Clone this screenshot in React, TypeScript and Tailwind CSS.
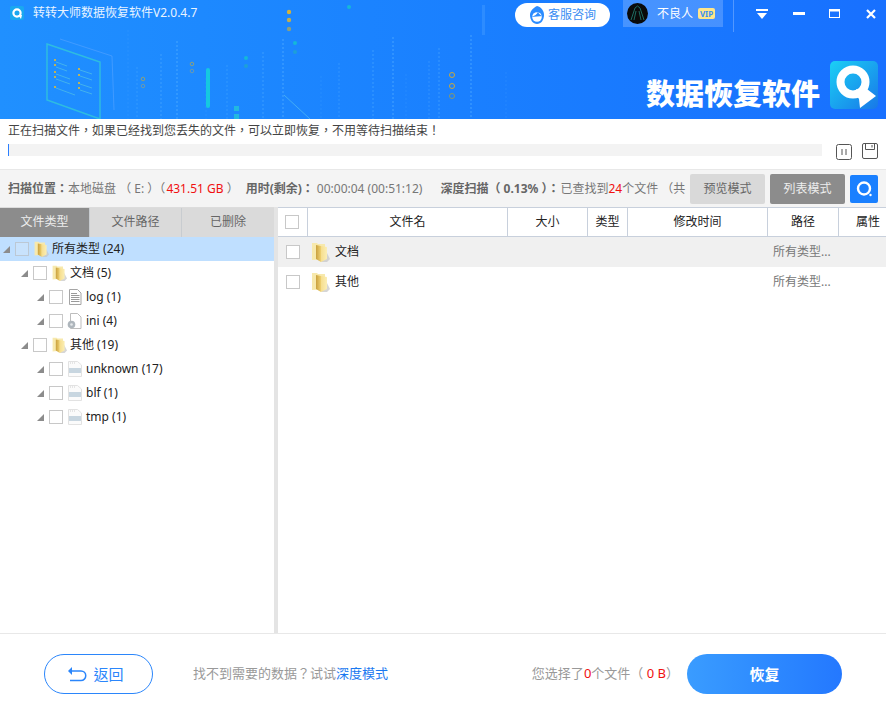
const font = { fontFamily: '"Noto Sans", "Noto Sans CJK TC", sans-serif' }

function Folder({ size = 20 }: { size?: number }) {
  return (
    <svg width={size} height={size} viewBox="0 0 20 20" className="shrink-0">
      <defs>
        <linearGradient id="foldMid" x1="0" y1="0" x2="1" y2="0">
          <stop offset="0" stopColor="#c9a03e" />
          <stop offset="1" stopColor="#f0d272" />
        </linearGradient>
        <linearGradient id="foldRight" x1="0" y1="0" x2="1" y2="0">
          <stop offset="0" stopColor="#f6de8e" />
          <stop offset="1" stopColor="#fbeeb5" />
        </linearGradient>
      </defs>
      <path d="M16 9 L20 17 L17 20 L11 20 Z" fill="#c4c4c4" opacity="0.7" />
      <path d="M2 1 H7 L8 2 H15 V17 L2 18 Z" fill="#f7e9ad" />
      <path d="M6 3 L11 4 V20 L6 17 Z" fill="url(#foldMid)" />
      <path d="M11 4 L17 5 V17 L11 20 Z" fill="url(#foldRight)" />
    </svg>
  )
}

function TextFile() {
  return (
    <svg width="14" height="16" viewBox="0 0 14 16" className="shrink-0">
      <path d="M1.5 .5 H9.5 L13 4 V15.5 H1.5 Z" fill="#fff" stroke="#a5a5a5" />
      <path d="M3 4.5 H9 M3 6.5 H11.5 M3 8.5 H11.5 M3 10.5 H11.5 M3 12.5 H11.5" stroke="#9a9a9a" />
    </svg>
  )
}

function IniFile() {
  return (
    <svg width="15" height="16" viewBox="0 0 15 16" className="shrink-0">
      <path d="M3.5 .5 H10.5 L14 4 V15.5 H3.5 Z" fill="#fff" stroke="#bdbdbd" />
      <circle cx="4.5" cy="11.5" r="3.8" fill="#aeb6bc" />
      <circle cx="4.5" cy="11.5" r="1.3" fill="#e4e8ea" />
    </svg>
  )
}

function BlankFile() {
  return (
    <svg width="14" height="16" viewBox="0 0 14 16" className="shrink-0">
      <path d="M.5 .5 H9.5 L13.5 4 V15.5 H.5 Z" fill="#fbfbfb" stroke="#e2e2e2" />
      <path d="M2 2 H8" stroke="#cfcfcf" strokeDasharray="1 1" />
      <rect x="1" y="7" width="12" height="5" fill="#c8d6e0" />
    </svg>
  )
}

function Check({ color = "border-[#c8c8c8] bg-white" }: { color?: string }) {
  return <span className={`block size-[14px] shrink-0 border ${color}`} />
}

function Arrow() {
  return (
    <svg width="7" height="7" viewBox="0 0 7 7" className="shrink-0">
      <path d="M7 0 V7 H0 Z" fill="#8c8c8c" />
    </svg>
  )
}

const tree = [
  { label: "所有类型 (24)", pad: "pl-[3px]", icon: <Folder size={16} />, iconBox: "ml-[3px] w-[17px]", text: "ml-[3px]", selected: true },
  { label: "文档 (5)", pad: "pl-[21px]", icon: <Folder size={16} />, iconBox: "ml-[3px] w-[17px]", text: "ml-[3px]" },
  { label: "log (1)", pad: "pl-[37px]", icon: <TextFile />, iconBox: "ml-[5px] w-[14px]", text: "ml-[4px]" },
  { label: "ini (4)", pad: "pl-[37px]", icon: <IniFile />, iconBox: "ml-[3px] w-[16px]", text: "ml-[4px]" },
  { label: "其他 (19)", pad: "pl-[21px]", icon: <Folder size={16} />, iconBox: "ml-[3px] w-[17px]", text: "ml-[3px]" },
  { label: "unknown (17)", pad: "pl-[37px]", icon: <BlankFile />, iconBox: "ml-[5px] w-[14px]", text: "ml-[4px]" },
  { label: "blf (1)", pad: "pl-[37px]", icon: <BlankFile />, iconBox: "ml-[5px] w-[14px]", text: "ml-[4px]" },
  { label: "tmp (1)", pad: "pl-[37px]", icon: <BlankFile />, iconBox: "ml-[5px] w-[14px]", text: "ml-[4px]" },
]

const columns = [
  { label: "文件名", w: "w-[200px] justify-center" },
  { label: "大小", w: "w-[80px] justify-center" },
  { label: "类型", w: "w-[40px] justify-center" },
  { label: "修改时间", w: "w-[140px] justify-center" },
  { label: "路径", w: "w-[71px] justify-center" },
  { label: "属性", w: "flex-1 pl-[17px]" },
]

function BannerArt() {
  const dots: { x: number; y: number; o: number }[] = []
  const cols = [127, 136, 160, 176, 205, 226, 262, 282, 320, 338, 372, 392, 405, 428, 438, 470, 505]
  cols.forEach((x, i) => {
    const top = 30 + ((i * 37) % 50)
    for (let y = top; y < 119; y += 4) dots.push({ x, y, o: 0.06 + (i % 4) * 0.05 })
  })
  return (
    <svg className="absolute inset-0" width="886" height="119" viewBox="0 0 886 119">
      {dots.map((d, i) => (
        <rect key={i} x={d.x} y={d.y} width="2" height="2" fill="#7fd0ff" opacity={d.o} />
      ))}
      <path d="M47 44 L100 62 L100 119 L47 100 Z" fill="none" stroke="#38d6d0" strokeWidth="1.5" opacity="0.65" />
      <path d="M60 39 L112 56 L114 110" fill="none" stroke="#7fb4ff" strokeWidth="1" opacity="0.35" />
      <path d="M56 62 L67 66 M56 67 L67 71 M56 74 L70 79 M56 79 L70 84 M56 88 L75 95 M80 70 L92 74 M80 76 L92 80 M80 84 L92 88 M80 90 L92 94" stroke="#5fd0e0" opacity="0.55" />
      <path d="M54 60 h2 M54 65 h2 M54 72 h2 M54 77 h2 M54 87 h2 M78 69 h2 M78 75 h2 M78 83 h2 M78 88 h2" stroke="#f4c020" strokeWidth="1.5" />
      <rect x="206" y="68" width="4" height="40" rx="2" fill="#15c8e0" />
      <rect x="234" y="106" width="5" height="5" fill="#22b8e0" />
      <rect x="234" y="114" width="5" height="5" fill="#22b8e0" />
      <path d="M284 95 L310 119" stroke="#5fc8f0" opacity="0.6" />
      <rect x="482" y="5" width="3" height="30" fill="#2d8cff" />
      <circle cx="289" cy="12" r="2.2" fill="#d3b23c" />
      <circle cx="289" cy="20" r="2.2" fill="#c0ae50" />
      <circle cx="289" cy="29" r="2.2" fill="#8aa080" />
      <circle cx="295" cy="43" r="2" fill="#15b8d8" />
      <circle cx="295" cy="52" r="2" fill="#1e9fd8" />
      <circle cx="246" cy="58" r="2" fill="#15b8d8" />
      <circle cx="246" cy="66" r="2" fill="#1e9fd8" />
      <circle cx="349" cy="7" r="2" fill="#15b8d8" />
      <circle cx="192" cy="64" r="1.8" fill="none" stroke="#8aa080" />
      <circle cx="192" cy="71" r="1.8" fill="none" stroke="#6a9ab0" />
      <circle cx="143" cy="79" r="1.8" fill="none" stroke="#8aa080" />
      <circle cx="143" cy="86" r="1.8" fill="none" stroke="#6a9ab0" />
      <circle cx="452" cy="75" r="2.5" fill="none" stroke="#c8a83c" />
      <circle cx="452" cy="86" r="2.5" fill="none" stroke="#c8a83c" />
      <circle cx="452" cy="96" r="2.5" fill="none" stroke="#88986c" />
    </svg>
  )
}

export default function App() {
  return (
    <div className="flex h-[709px] w-[886px] flex-col overflow-hidden bg-white text-xs" style={font}>
      {/* banner */}
      <div className="relative h-[119px] shrink-0 bg-gradient-to-r from-[#2090ff] to-[#1870ff]">
        <BannerArt />
        <div className="relative flex h-[32px] items-start pr-[10px]">
          <svg width="14" height="14" viewBox="0 0 14 14" className="ml-[10px] mt-[6px] shrink-0">
            <rect width="14" height="14" rx="2" fill="#19a8f0" />
            <circle cx="7" cy="7" r="3.6" fill="none" stroke="#fff" strokeWidth="2.2" />
            <path d="M8 9 L12 9 L11 13 Z" fill="#fff" />
          </svg>
          <span className="ml-[9px] mt-[4px] text-xs leading-[18px] text-[#e8f3ff]">转转大师数据恢复软件V2.0.4.7</span>
          <div className="ml-auto mt-[3px] flex h-[24px] w-[95px] items-center gap-[3px] rounded-full bg-white pl-[14px]">
            <svg width="16" height="18" viewBox="0 0 16 18" className="shrink-0">
              <path d="M8 0 C12.5 1 15 5 15 9 C15 14 12 18 8 18 C4 18 1 14 1 9 C1 5 4 2 8 0 Z" fill="#2b8cff" />
              <circle cx="8" cy="11" r="4.8" fill="#fff" />
              <path d="M2 11 C6 10 8 8 9 6 C10 8 12 10 14 10" fill="#2b8cff" />
            </svg>
            <span className="text-xs text-[#3b8ff3]">客服咨询</span>
          </div>
          <div className="ml-[13px] flex h-[27px] w-[100px] items-center bg-white/20 pl-[4px]">
            <svg width="21" height="21" viewBox="0 0 21 21" className="shrink-0">
              <circle cx="10.5" cy="10.5" r="10.5" fill="#0a0a0a" />
              <path d="M4 17 L8 5 L10.5 3 L13 5 L17 17 M7 17 L9 8 M14 17 L12 8" fill="none" stroke="#1d6a60" />
            </svg>
            <span className="ml-[9px] text-xs text-white">不良人</span>
            <span className="ml-[5px] flex h-[11px] w-[17px] items-center justify-center rounded-[2px] bg-[#ffe68a] text-[8px] font-bold leading-none text-[#3b8ff3]">VIP</span>
          </div>
          <div className="ml-[10px] h-[32px] w-px bg-white/25" />
          <div className="ml-[22px] mt-[9px] flex items-start">
            <svg width="12" height="11" viewBox="0 0 12 11" className="shrink-0">
              <rect x="0" y="0" width="12" height="2" fill="#fff" />
              <path d="M1 4 H11 L6 10 Z" fill="#fff" />
            </svg>
            <svg width="12" height="3" viewBox="0 0 12 3" className="ml-[25px] mt-[3px] shrink-0">
              <rect width="12" height="3" fill="#fff" />
            </svg>
            <svg width="12" height="10" viewBox="0 0 12 10" className="ml-[24px] shrink-0">
              <rect x=".5" y=".5" width="10" height="8" fill="none" stroke="#fff" />
              <rect x="0" y="0" width="11" height="2.5" fill="#fff" />
            </svg>
            <svg width="10" height="10" viewBox="0 0 10 10" className="ml-[25px] shrink-0">
              <path d="M1 1 L9 9 M9 1 L1 9" stroke="#fff" strokeWidth="2.2" />
            </svg>
          </div>
        </div>
        <div className="relative mr-[8px] mt-[29px] flex items-start justify-end gap-[10px]">
          <span className="mt-[14px] text-[29px] font-black leading-[34px] text-white [font-family:'Noto_Sans_CJK_SC']">数据恢复软件</span>
          <svg width="48" height="48" viewBox="0 0 48 48" className="shrink-0">
            <defs>
              <linearGradient id="lg" x1="0" y1="0" x2="1" y2="1">
                <stop offset="0" stopColor="#1bd0f5" />
                <stop offset="1" stopColor="#1878e8" />
              </linearGradient>
            </defs>
            <rect width="48" height="48" rx="5" fill="url(#lg)" />
            <circle cx="23" cy="21" r="12.5" fill="none" stroke="#fff" strokeWidth="8" />
            <path d="M26 28 L30 30 L33 25 L46 35 L30 47 L29 38 C27 36 26 32 26 28 Z" fill="#fff" />
          </svg>
        </div>
      </div>

      {/* scan message */}
      <div className="flex h-[50px] shrink-0 flex-col pl-[8px]">
        <p className="mt-[3px] h-[18px] text-xs leading-[18px] text-[#444]">正在扫描文件，如果已经找到您丢失的文件，可以立即恢复，不用等待扫描结束！</p>
        <div className="mt-[4px] flex items-start">
          <div className="h-[12px] w-[814px] bg-[#f3f3f3]">
            <div className="h-[12px] w-px bg-[#2b7fff]" />
          </div>
          <svg width="16" height="16" viewBox="0 0 16 16" className="ml-[14px] shrink-0">
            <rect x=".5" y=".5" width="15" height="15" rx="2" fill="none" stroke="#555" />
            <path d="M6 5 V11 M10 5 V11" stroke="#555" />
          </svg>
          <svg width="16" height="16" viewBox="0 0 16 16" className="ml-[10px] -mt-[1px] shrink-0">
            <path d="M.5 2 Q.5 .5 2 .5 H14 Q15.5 .5 15.5 2 V14 Q15.5 15.5 14 15.5 H2 Q.5 15.5 .5 14 Z" fill="none" stroke="#555" />
            <path d="M3.5 .5 V6.5 H12.5 V.5 M10 2 V4.5" fill="none" stroke="#555" />
          </svg>
        </div>
      </div>

      {/* stats */}
      <div className="flex h-[38px] shrink-0 items-center overflow-hidden border-t border-[#e8e8e8] bg-[#f4f4f4] pl-[8px] pr-[8px] text-[#777]">
        <div className="flex w-[682px] shrink-0 items-center overflow-hidden whitespace-pre">
          <span className="font-bold text-[#666]">扫描位置：</span>
          <span>本地磁盘 （ E: ）（ </span>
          <span className="-ml-[2px] text-[#f01010]">431.51 GB</span>
          <span> ）</span>
          <span className="ml-[7px] mr-[3px] font-bold text-[#666]">用时(剩余)：</span>
          <span>00:00:04 (00:51:12)</span>
          <span className="ml-[18px] mr-[1px] font-bold text-[#666]">深度扫描（ 0.13% ）：</span>
          <span>已查找到</span>
          <span className="text-[#f01010]">24</span>
          <span>个文件 （共</span>
        </div>
        <button className="h-[30px] w-[75px] rounded-[2px] bg-[#d9d9d9] text-xs text-[#666]">预览模式</button>
        <button className="ml-[5px] h-[30px] w-[75px] rounded-[2px] bg-[#8c8c8c] text-xs text-[#eee]">列表模式</button>
        <div className="ml-[5px] flex size-[28px] items-center justify-center rounded-[2px] bg-[#1a80ff]">
          <svg width="16" height="16" viewBox="0 0 16 16">
            <circle cx="8" cy="7.5" r="6" fill="none" stroke="#fff" strokeWidth="2.4" />
            <circle cx="14.5" cy="14" r="1.2" fill="#fff" />
          </svg>
        </div>
      </div>

      {/* main */}
      <div className="flex min-h-0 flex-1">
        <div className="w-[274px] shrink-0">
          <div className="flex h-[30px] border-t border-[#dcdcdc] text-xs">
            <div className="flex w-[89px] items-center justify-center bg-[#8c8c8c] pb-[2px] text-[#eee]">文件类型</div>
            <div className="flex w-[92px] items-center justify-center border-l border-[#c8ccd0] bg-[#dadada] pb-[2px] text-[#666]">文件路径</div>
            <div className="flex flex-1 items-center justify-center border-l border-[#c8ccd0] bg-[#dadada] pb-[2px] text-[#666]">已删除</div>
          </div>
          {tree.map((row) => (
            <div
              key={row.label}
              className={`flex h-[24px] items-center ${row.pad} ${row.selected ? "bg-[#bfdfff]" : ""}`}
            >
              <Arrow />
              <span className="ml-[5px]"><Check color={row.selected ? "border-[#bcc8d4] bg-[#c8e2fc]" : "border-[#c8c8c8] bg-white"} /></span>
              <span className={`flex justify-center ${row.iconBox}`}>{row.icon}</span>
              <span className={`text-xs leading-none text-[#222] ${row.text}`}>{row.label}</span>
            </div>
          ))}
        </div>
        <div className="w-[4px] shrink-0 bg-[#e4e4e4]" />
        <div className="min-w-0 flex-1">
          <div className="flex h-[30px] border-y border-[#c8d0dc] text-xs text-[#222]">
            <div className="flex w-[29px] items-center pl-[7px]"><Check /></div>
            {columns.map((c) => (
              <div key={c.label} className={`flex ${c.w} items-center border-l border-[#c8d0dc]`}>{c.label}</div>
            ))}
          </div>
          {["文档", "其他"].map((name, i) => (
            <div key={name} className={`flex h-[30px] items-center pl-[8px] ${i === 0 ? "bg-[#f0f0f0]" : ""}`}>
              <Check />
              <span className="ml-[10px]"><Folder /></span>
              <span className="ml-[5px] text-xs text-[#222]">{name}</span>
              <span className="ml-auto w-[113px] text-xs text-[#777]">所有类型...</span>
            </div>
          ))}
        </div>
      </div>

      {/* footer */}
      <div className="flex h-[76px] shrink-0 items-center border-t border-[#e8e8e8] pl-[44px] pt-[5px]">
        <button className="flex h-[40px] w-[109px] items-center justify-center gap-[6px] rounded-full border border-[#2b86fb] pr-[6px] text-[15px] text-[#2b86fb]">
          <svg width="20" height="15" viewBox="0 0 20 15" className="shrink-0">
            <path d="M5 0 V8 L1 4 Z" fill="#2b86fb" />
            <path d="M4 4 H14 A4.5 4.5 0 0 1 14 13.5 H3" fill="none" stroke="#2b86fb" strokeWidth="1.5" />
          </svg>
          返回
        </button>
        <span className="ml-[40px] text-[13px] text-[#999]">
          找不到需要的数据？试试<span className="text-[#1a78f0]">深度模式</span>
        </span>
        <span className="ml-auto text-[13px] text-[#999]">
          您选择了<span className="text-[#f01010]">0</span>个文件（ <span className="text-[#f01010]">0 B</span>）
        </span>
        <button className="ml-[8px] mr-[44px] h-[40px] w-[155px] rounded-full bg-gradient-to-r from-[#3a9cff] to-[#2478ff] text-[15px] font-bold text-white">恢复</button>
      </div>
    </div>
  )
}
